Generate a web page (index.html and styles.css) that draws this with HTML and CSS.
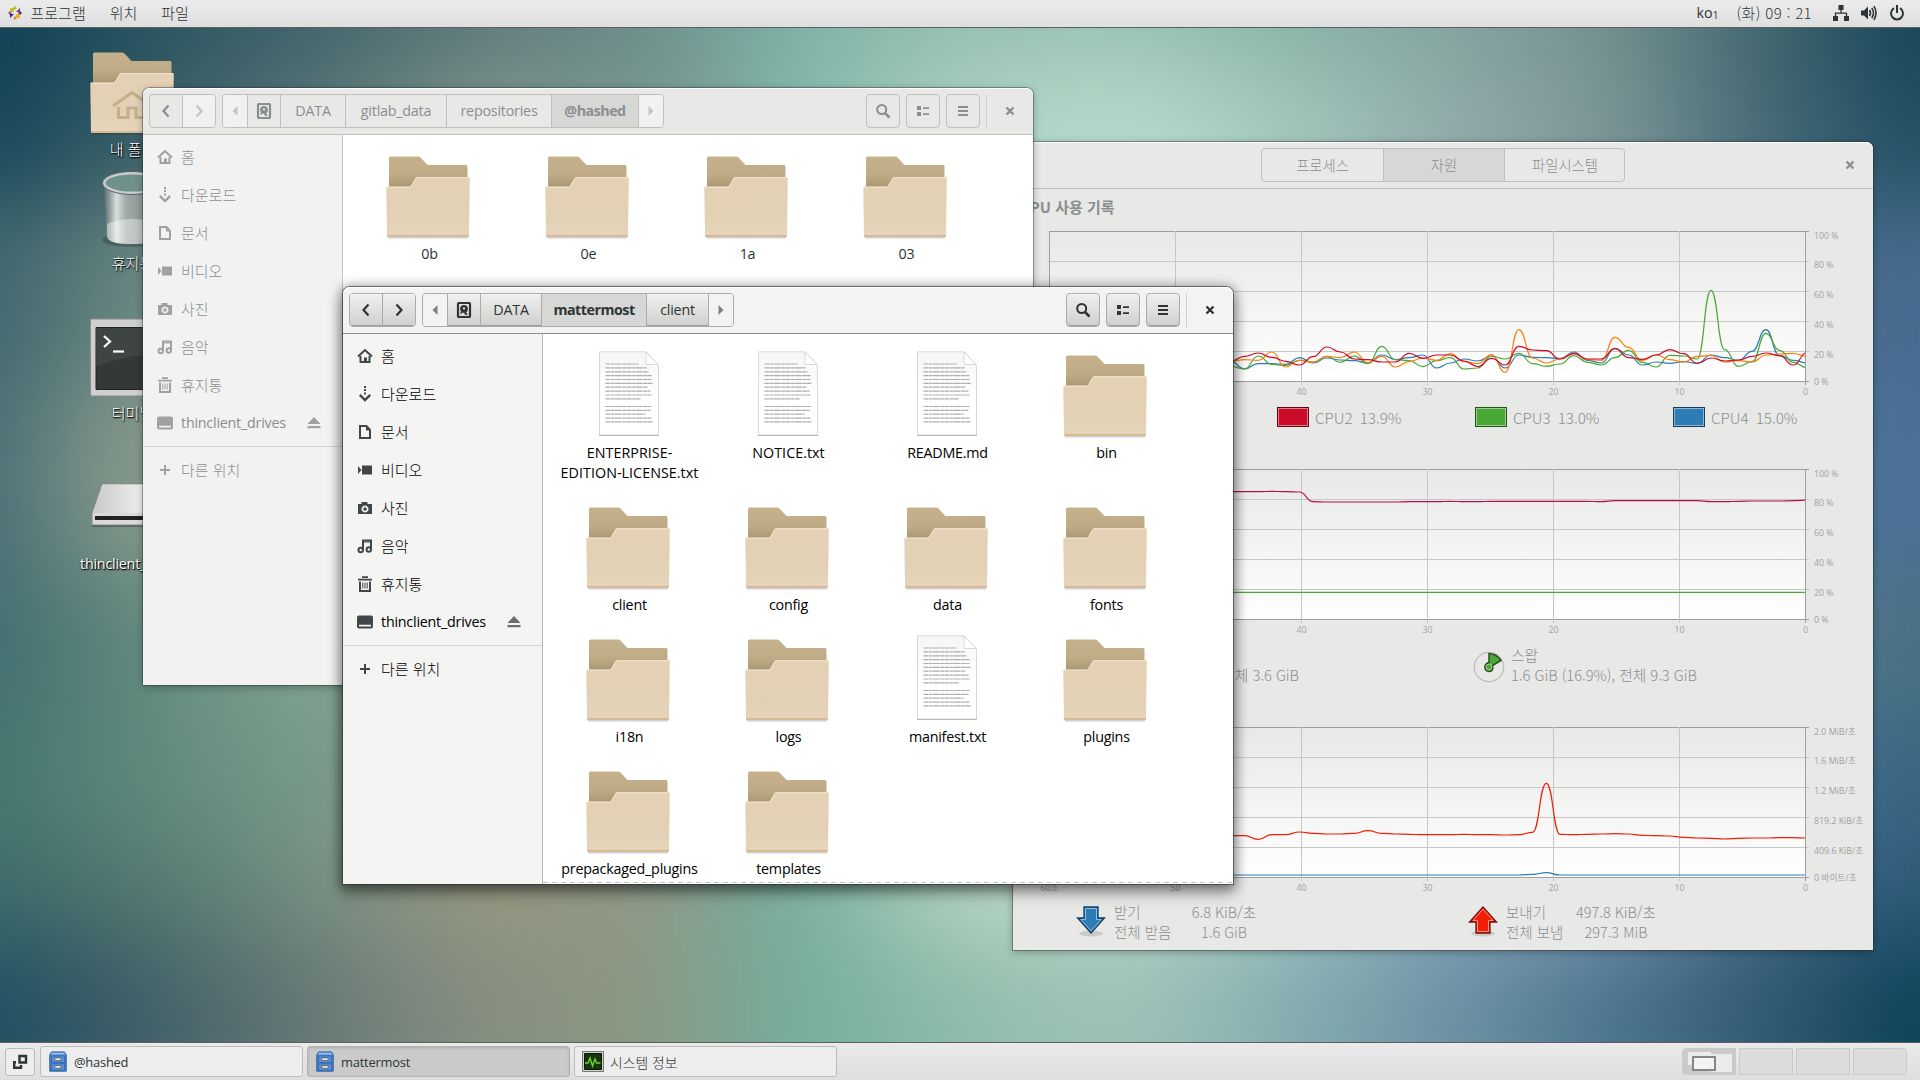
FILE: index.html
```html
<!DOCTYPE html>
<html lang="ko">
<head>
<meta charset="utf-8">
<title>Desktop</title>
<link rel="stylesheet" href="styles.css">
</head>
<body>
<svg class="defs" width="0" height="0">
  <defs>
    <linearGradient id="gBack" x1="0" y1="0" x2="0" y2="1"><stop offset="0" stop-color="#c5b28d"/><stop offset=".55" stop-color="#bfab86"/><stop offset="1" stop-color="#a6926e"/></linearGradient>
    <linearGradient id="gFront" x1="0" y1="0" x2="0" y2="1"><stop offset="0" stop-color="#e5d1b5"/><stop offset=".6" stop-color="#e2d0b5"/><stop offset="1" stop-color="#e6d5ba"/></linearGradient>
    <linearGradient id="gPage" x1="0" y1="0" x2="0" y2="1"><stop offset="0" stop-color="#f6f6f4"/><stop offset=".6" stop-color="#fff"/></linearGradient>
    <linearGradient id="gPlot" x1="0" y1="0" x2="0" y2="1"><stop offset="0" stop-color="#e8e8e7"/><stop offset="1" stop-color="#fff"/></linearGradient>
    <linearGradient id="gMetal" x1="0" y1="0" x2="1" y2="0"><stop offset="0" stop-color="#5f6b69"/><stop offset=".1" stop-color="#98a19f"/><stop offset=".22" stop-color="#eceeed"/><stop offset=".4" stop-color="#a9b1af"/><stop offset="1" stop-color="#808a88"/></linearGradient>
    <linearGradient id="gDrive" x1="0" y1="0" x2="1" y2="0"><stop offset="0" stop-color="#c9c9c9"/><stop offset=".7" stop-color="#f2f2f2"/><stop offset="1" stop-color="#d8d8d8"/></linearGradient>
    <clipPath id="plotClip"><rect x="0" y="0" width="756" height="151"/></clipPath>
    <symbol id="folder" viewBox="0 0 84 84">
      <path d="M2 81h80v1.5H2z" fill="#000" opacity=".18"/>
      <path d="M3 34V2Q3 .5 4.500 .5H32q1.500 0 2.500 1L41.500 9H80q1.500 0 1.500 1.500V34z" fill="url(#gBack)"/>
      <path d="M.3 31.800Q.3 30.500 1.600 30.500H23q1.500 0 2.200-1.200L29.500 22q.6-1 1.900-1H82.500q1.300 0 1.300 1.300L83 79.800q0 1.200-1.200 1.200H2.200Q1 81 1 79.800z" fill="url(#gFront)"/>
      <path d="M1 79h82v.8Q83 81 81.800 81H2.200Q1 81 1 79.800z" fill="#d6ba94"/>
      <path d="M1 31.200H23.500q1.500 0 2.200-1.200L30 22.600q.5-.9 1.400-.9H83" fill="none" stroke="#f0e2cc" stroke-width="1"/>
    </symbol>
    <symbol id="doc" viewBox="0 0 62 86">
      <path d="M1 1h48l12 13.500V85H1z" fill="#000" opacity=".13"/>
      <path d="M1.500 .8h46.500l12.500 14V84h-59z" fill="url(#gPage)" stroke="#d9d9d7" stroke-width="1"/>
      <path d="M1 84.500h60" stroke="#b9b9b7" stroke-width="1"/>
      <path d="M48 1v12.500h12z" fill="#fff" stroke="#d0d0ce" stroke-width=".8"/>
      <path d="M7.500 13h33m-33 3.900h41m-41 3.900h43m-43 3.900h46m-46 3.800h46m-46 3.900h47m-47 3.800h42m-42 3.900h45m-45 3.900h46m-46 3.800h35m-35 7.700h46m-46 3.900h45m-45 3.800h40m-40 3.900h46m-46 3.800h47" stroke="#999" stroke-width="1.200" stroke-dasharray="5 .6 3 .5 7 .6 4 .4" fill="none" opacity=".8"/>
    </symbol>
    <symbol id="home" viewBox="0 0 16 16"><path d="M1 8.600 8 2l7 6.600" fill="none" stroke="currentColor" stroke-width="2"/><path d="M3.500 8v6h9V8" fill="none" stroke="currentColor" stroke-width="2"/><path d="M7 9.500h3V14H7z" fill="currentColor"/></symbol>
    <symbol id="down" viewBox="0 0 16 16"><path d="M8 0v2m0 1v2m0 1.500v2" stroke="currentColor" stroke-width="2"/><path d="M2.800 8.800 8 14l5.200-5.200" fill="none" stroke="currentColor" stroke-width="2.400"/></symbol>
    <symbol id="page" viewBox="0 0 16 16"><path d="M3 2h6.500L13 5.800V14H3z" fill="none" stroke="currentColor" stroke-width="2"/><path d="M9 1v5.500h4.500z" fill="currentColor"/></symbol>
    <symbol id="video" viewBox="0 0 16 16"><path d="M5 3.500h10v9H5zM1 4l3.500 4L1 12z" fill="currentColor"/></symbol>
    <symbol id="camera" viewBox="0 0 16 16"><path d="M1 4h3.500V2h6v2H15v10H1zM8 5.500a3.500 3.500 0 1 0 .01 0z" fill="currentColor" fill-rule="evenodd"/><circle cx="8" cy="9" r="1.800" fill="currentColor"/></symbol>
    <symbol id="music" viewBox="0 0 16 16"><path d="M6 12V2.500h8V11" fill="none" stroke="currentColor" stroke-width="2"/><path d="M5 4h9" stroke="currentColor"/><circle cx="3.700" cy="12" r="2.200" fill="none" stroke="currentColor" stroke-width="2"/><circle cx="11.800" cy="11.500" r="2.200" fill="none" stroke="currentColor" stroke-width="2"/></symbol>
    <symbol id="bin" viewBox="0 0 16 16"><path d="M5 1.200h6M1 3.700h14" stroke="currentColor" stroke-width="1.800"/><path d="M3 5.500V15h10V5.500" fill="none" stroke="currentColor" stroke-width="2"/><path d="M5.800 6.500v6M8 6.500v6m2.200-6v6" stroke="currentColor"/></symbol>
    <symbol id="drive" viewBox="0 0 16 16"><path d="M2 1.500h12q2 0 2 2v9q0 2-2 2H2q-2 0-2-2v-9q0-2 2-2zM2 10.800v1.600h12v-1.600z" fill="currentColor" fill-rule="evenodd"/></symbol>
    <symbol id="plus" viewBox="0 0 16 16"><path d="M8 3v10M3 8h10" stroke="currentColor" stroke-width="2"/></symbol>
    <symbol id="eject" viewBox="0 0 14 14"><path d="M7 1l6.500 7h-13zM.5 10h13v2.200H.5z" fill="currentColor"/></symbol>
    <symbol id="prev" viewBox="0 0 16 16"><path d="M10.500 2.500 5.500 8l5 5.500" fill="none" stroke="currentColor" stroke-width="2.200"/></symbol>
    <symbol id="next" viewBox="0 0 16 16"><path d="M5.500 2.500 10.500 8l-5 5.500" fill="none" stroke="currentColor" stroke-width="2.200"/></symbol>
    <symbol id="triL" viewBox="0 0 16 16"><path d="M10.500 3v10L5.500 8z" fill="currentColor"/></symbol>
    <symbol id="triR" viewBox="0 0 16 16"><path d="M5.500 3v10l5-5z" fill="currentColor"/></symbol>
    <symbol id="disk" viewBox="0 0 16 16"><rect x="2" y="1" width="12" height="14" rx="1" fill="none" stroke="currentColor" stroke-width="2.200"/><circle cx="8" cy="6.800" r="3.900" fill="currentColor"/><circle cx="8" cy="6.400" r="1.100" fill="#e4e4e2"/><path d="M7 7l5 5.500-3 .5z" fill="currentColor"/><path d="M4.500 11.500l2.200-2" stroke="currentColor" stroke-width="1.200"/></symbol>
    <symbol id="search" viewBox="0 0 16 16"><circle cx="6.700" cy="6.500" r="4.500" fill="none" stroke="currentColor" stroke-width="2"/><path d="M9.800 9.800 14.500 14.500" stroke="currentColor" stroke-width="2.600"/></symbol>
    <symbol id="list" viewBox="0 0 16 16"><path d="M2 3h4v4H2zM2 9h4v4H2zM8 4.200h6v1.800H8zM8 10.200h6V12H8z" fill="currentColor"/></symbol>
    <symbol id="menu" viewBox="0 0 16 16"><path d="M3 3h10v2H3zM3 7h10v2H3zM3 11h10v2H3z" fill="currentColor"/></symbol>
    <symbol id="close" viewBox="0 0 16 16"><path d="M4.500 4.500l7 7m0-7l-7 7" stroke="currentColor" stroke-width="2.300"/></symbol>
    <symbol id="cabinet" viewBox="0 0 20 24"><path d="M3 1h14l2 3v18H1V4z" fill="#4a82cf" stroke="#2c5898"/><path d="M3.200 1.800h13.600l1.300 2H2z" fill="#9ec3f0"/><path d="M3 5.500h14v7H3zM3 14h14v7H3z" fill="#5c94de" stroke="#2f5fa6" stroke-width=".8"/><path d="M6.500 7.500h7v2.800h-7zM6.500 16h7v2.800h-7z" fill="#f4f4f0" stroke="#4b4b45" stroke-width=".8"/></symbol>
  </defs>
</svg>

<div class="backdrop"><div class="wallpaper"><i class="w1"></i><i class="w2"></i><i class="w3"></i><i class="w4"></i><i class="w5"></i><i class="w6"></i><i class="w7"></i><i class="w8"></i></div></div>

<header class="topbar">
  <div class="menus">
    <span class="apps"><svg width="14" height="14" viewBox="0 0 14 14"><path d="M7 0l2 2-2 2-2-2z" fill="#a4c639"/><path d="M7 14l2-2-2-2-2 2z" fill="#b9a13a"/><path d="M0 7l2-2 2 2-2 2z" fill="#a14f8c"/><path d="M14 7l-2-2-2 2 2 2z" fill="#3d3f7a"/><path d="M2 2h4v4z" fill="#9ccd2a"/><path d="M12 2v4L8 6z" fill="#932279"/><path d="M12 12H8V8z" fill="#efa724"/><path d="M2 12V8l4 0z" fill="#262577"/><path d="M2 2l4 4H2zM12 12l-4-4h4z" fill="#efa724"/></svg>프로그램</span>
    <span>위치</span><span>파일</span>
  </div>
  <div class="status">
    <span class="lang">ko<sub>1</sub></span><span class="clock">(화) 09 : 21</span>
    <svg width="16" height="16" viewBox="0 0 16 16"><path d="M5.500 0h5v5h-5zM0 11h5v5H0zM11 11h5v5h-5z" fill="#2e3436"/><path d="M8 5v3M2.500 11V8.200h11V11" fill="none" stroke="#2e3436" stroke-width="1.300"/></svg>
    <svg width="16" height="16" viewBox="0 0 16 16"><path d="M0 5.500h3L7 1.500v13l-4-4H0z" fill="#2e3436"/><path d="M8.500 5q2 3 0 6M10.800 3q3.400 5 0 10M13 1.200q4 6.800 0 13.600" fill="none" stroke="#2e3436" stroke-width="1.600"/></svg>
    <svg width="16" height="16" viewBox="0 0 16 16"><path d="M5 3.200a6 6 0 1 0 6 0" fill="none" stroke="#2e3436" stroke-width="2"/><path d="M8 0v8" stroke="#2e3436" stroke-width="2"/></svg>
  </div>
</header>

<main class="desktop">
  <div class="shortcut s-home"><svg width="84" height="84"><use href="#folder"/><path d="M23 54 42 40.500 61 54" fill="none" stroke="#c5ae8a" stroke-width="3"/><path d="M28.500 55v10.500H38V56h8v9.500h9.500V55" fill="none" stroke="#c5ae8a" stroke-width="3"/></svg><span>내 폴더</span></div>
  <div class="shortcut s-trash"><svg width="84" height="84" viewBox="0 0 84 84"><ellipse cx="42" cy="68" rx="30" ry="7" fill="#000" opacity=".2"/><path d="M14 13l3 51q0 8 25 8t25-8l3-51z" fill="url(#gMetal)" opacity=".88"/><path d="M17 52q25-10 50 0v12q0 8-25 8t-25-8z" fill="#fff" opacity=".4"/><ellipse cx="42" cy="11" rx="28" ry="10" fill="#70908c" stroke="#c9cecd" stroke-width="3"/><ellipse cx="42" cy="11" rx="29.500" ry="11.500" fill="none" stroke="#59625f" stroke-width="1"/></svg><span>휴지통</span></div>
  <div class="shortcut s-term"><svg width="84" height="84" viewBox="0 0 84 84"><path d="M.5 1h83v77H.5z" fill="#cfcfcd" stroke="#8a8a88"/><path d="M6 9.500h72v62H6z" fill="#323936" stroke="#222"/><path d="M6 10h72v25Q40 36 6 48z" fill="#47504b" opacity=".6"/><path d="M14 18l6 5.500-6 5.500" fill="none" stroke="#fff" stroke-width="2.200"/><path d="M23 33.500h11" stroke="#fff" stroke-width="2.200"/></svg><span>터미널</span></div>
  <div class="shortcut s-drive"><svg width="84" height="46" viewBox="0 0 84 46"><path d="M2 42h80v2H2z" fill="#000" opacity=".3"/><path d="M12 1h60l10 29v12H2V30z" fill="#dadada" stroke="#858585"/><path d="M12.500 1.500h59L81 30H3z" fill="url(#gDrive)"/><path d="M5 33h76v4H5z" fill="#222"/></svg><span class="la">thinclient_drives</span></div>

  <section class="window monitor back">
    <div class="header">
      <div class="tabs"><b>프로세스</b><b class="on">자원</b><b>파일시스템</b></div>
      <svg class="x" width="16" height="16"><use href="#close"/></svg>
    </div>
    <h2>CPU 사용 기록</h2>
    <svg class="chart" id="cpu" width="756" height="151"></svg>
    <div class="legend">
      <span><i class="c1"></i>CPU1<em>14.1%</em></span><span><i class="c2"></i>CPU2<em>13.9%</em></span><span><i class="c3"></i>CPU3<em>13.0%</em></span><span><i class="c4"></i>CPU4<em>15.0%</em></span>
    </div>
    <svg class="chart" id="mem" width="756" height="151"></svg>
    <div class="memory">
      <div class="m-left">전체 3.6 GiB</div>
      <svg width="32" height="32" viewBox="0 0 32 32"><circle cx="16" cy="16" r="14.700" fill="none" stroke="#bdbdba" stroke-width="1.300"/><path d="M16 2.500Q24 3 28 9.500L19.500 14.500Q21 20 16 20.500Q11 20 12 15Q13 12 16 11.500z" fill="#4aa836" stroke="#2a4a20" stroke-width="1.500"/><circle cx="16" cy="16" r="3" fill="#4aa836" stroke="#b5deaa" stroke-width=".8"/></svg>
      <div class="m-right">스왑<br>1.6 GiB (16.9%), 전체 9.3 GiB</div>
    </div>
    <svg class="chart" id="net" width="756" height="151"></svg>
    <div class="traffic">
      <svg width="30" height="32" viewBox="0 0 30 32"><ellipse cx="15" cy="28.500" rx="12" ry="3" fill="#000" opacity=".12"/><path d="M8 2h14v11h6.500L15 28 1.500 13H8z" fill="#2c7cb5" stroke="#173f5f" stroke-width="1.300"/><path d="M9.500 3.500h11v11h4.500L15 26 5 14.500h4.500z" fill="none" stroke="#8cc0e4"/></svg>
      <div class="t-name">받기<br>전체 받음</div><div class="t-val">6.8 KiB/초<br>1.6 GiB</div>
      <svg class="up" width="30" height="32" viewBox="0 0 30 32"><ellipse cx="15" cy="28.500" rx="12" ry="3" fill="#000" opacity=".12"/><path d="M8 28h14V17h6.500L15 2 1.500 17H8z" fill="#ef1e05" stroke="#7e1206" stroke-width="1.300"/><path d="M9.500 26.500h11v-11h4.500L15 4 5 15.500h4.500z" fill="none" stroke="#ff9385"/></svg>
      <div class="t-name">보내기<br>전체 보냄</div><div class="t-val">497.8 KiB/초<br>297.3 MiB</div>
    </div>
  </section>

  <section class="window files back f1">
    <div class="header la">
      <div class="group nav"><b class="sq"><svg><use href="#prev"/></svg></b><b class="sq flat dim"><svg><use href="#next"/></svg></b></div>
      <div class="group path"><b class="arrow flat"><svg><use href="#triL"/></svg></b><b class="sq"><svg><use href="#disk"/></svg></b><b class="p-data">DATA</b><b class="p-git">gitlab_data</b><b class="p-rep">repositories</b><b class="p-hash on">@hashed</b><b class="arrow flat"><svg><use href="#triR"/></svg></b></div>
      <div class="tools"><b><svg><use href="#search"/></svg></b><b><svg><use href="#list"/></svg></b><b><svg><use href="#menu"/></svg></b><i></i><svg class="x"><use href="#close"/></svg></div>
    </div>
    <div class="body">
      <nav>
        <a><svg><use href="#home"/></svg>홈</a><a><svg><use href="#down"/></svg>다운로드</a><a><svg><use href="#page"/></svg>문서</a><a><svg><use href="#video"/></svg>비디오</a><a><svg><use href="#camera"/></svg>사진</a><a><svg><use href="#music"/></svg>음악</a><a><svg><use href="#bin"/></svg>휴지통</a><a class="la"><svg><use href="#drive"/></svg>thinclient_drives<svg class="eject"><use href="#eject"/></svg></a>
        <hr><a><svg><use href="#plus"/></svg>다른 위치</a>
      </nav>
      <div class="grid la">
        <div><svg class="fo"><use href="#folder"/></svg>0b</div><div><svg class="fo"><use href="#folder"/></svg>0e</div><div><svg class="fo"><use href="#folder"/></svg>1a</div><div><svg class="fo"><use href="#folder"/></svg>03</div>
      </div>
    </div>
  </section>

  <section class="window files front f2">
    <div class="header la">
      <div class="group nav"><b class="sq"><svg><use href="#prev"/></svg></b><b class="sq"><svg><use href="#next"/></svg></b></div>
      <div class="group path"><b class="arrow flat"><svg><use href="#triL"/></svg></b><b class="sq"><svg><use href="#disk"/></svg></b><b class="p-data">DATA</b><b class="p-mat on">mattermost</b><b class="p-cli">client</b><b class="arrow flat"><svg><use href="#triR"/></svg></b></div>
      <div class="tools"><b><svg><use href="#search"/></svg></b><b><svg><use href="#list"/></svg></b><b><svg><use href="#menu"/></svg></b><i></i><svg class="x"><use href="#close"/></svg></div>
    </div>
    <div class="body">
      <nav>
        <a><svg><use href="#home"/></svg>홈</a><a><svg><use href="#down"/></svg>다운로드</a><a><svg><use href="#page"/></svg>문서</a><a><svg><use href="#video"/></svg>비디오</a><a><svg><use href="#camera"/></svg>사진</a><a><svg><use href="#music"/></svg>음악</a><a><svg><use href="#bin"/></svg>휴지통</a><a class="la"><svg><use href="#drive"/></svg>thinclient_drives<svg class="eject"><use href="#eject"/></svg></a>
        <hr><a><svg><use href="#plus"/></svg>다른 위치</a>
      </nav>
      <div class="grid more la">
        <div class="caps"><svg class="do"><use href="#doc"/></svg>ENTERPRISE-<br>EDITION-LICENSE.txt</div><div class="caps"><svg class="do"><use href="#doc"/></svg>NOTICE.txt</div><div><svg class="do"><use href="#doc"/></svg>README.md</div><div><svg class="fo"><use href="#folder"/></svg>bin</div>
        <div><svg class="fo"><use href="#folder"/></svg>client</div><div><svg class="fo"><use href="#folder"/></svg>config</div><div><svg class="fo"><use href="#folder"/></svg>data</div><div><svg class="fo"><use href="#folder"/></svg>fonts</div>
        <div><svg class="fo"><use href="#folder"/></svg>i18n</div><div><svg class="fo"><use href="#folder"/></svg>logs</div><div><svg class="do"><use href="#doc"/></svg>manifest.txt</div><div><svg class="fo"><use href="#folder"/></svg>plugins</div>
        <div><svg class="fo"><use href="#folder"/></svg>prepackaged_plugins</div><div><svg class="fo"><use href="#folder"/></svg>templates</div>
      </div>
    </div>
  </section>
</main>

<footer class="taskbar">
  <div class="show"><svg width="16" height="16" viewBox="0 0 16 16"><path d="M7.500 2h6.500v6.500H7.500z" fill="none" stroke="#2e3436" stroke-width="2.400"/><path d="M2.200 7v6.800H9V11M1 8.200h3" fill="none" stroke="#2e3436" stroke-width="2.400"/></svg></div>
  <div class="task la"><svg width="20" height="24"><use href="#cabinet"/></svg>@hashed</div>
  <div class="task la on"><svg width="20" height="24"><use href="#cabinet"/></svg>mattermost</div>
  <div class="task"><svg width="22" height="22" viewBox="0 0 22 22"><path d="M.5 .5h21v20H.5z" fill="#d3d3d1" stroke="#777"/><path d="M2.500 2.500h17v16h-17z" fill="#17330f" stroke="#0b1a07"/><path d="M3 12h3l2-5 2.500 8 2.500-7 1.500 4h4" fill="none" stroke="#6fd32c" stroke-width="1.400"/></svg>시스템 정보</div>
  <div class="spaces"><div class="cur"><i class="m1"></i><i class="m2"></i><i class="m3"></i></div><div></div><div></div><div></div></div>
</footer>
<script src="charts.js"></script>
</body>
</html>
```
FILE: styles.css
```css
* { box-sizing: border-box; }
html { height: 1080px; overflow: hidden; }
body { margin: 0; width: 1920px; height: 1080px; overflow: hidden; position: relative; display: flex; flex-direction: column; background: #5f8a88; color: #2e3436; font: 300 15px/20px "Noto Sans CJK KR", sans-serif; }
svg { display: block; flex: none; overflow: visible; }
b { font-weight: inherit; }
em, i { font-style: normal; }
.defs { position: absolute; }
.la { font-family: "Open Sans", "Noto Sans CJK KR", sans-serif; font-size: 14.3px; font-weight: 400; letter-spacing: -.22px; }

.backdrop { position: absolute; inset: 0; overflow: clip; contain: paint; }
.wallpaper { margin: -60px -80px; height: 1200px; display: grid; grid-template-rows: 130px 130px 180px 190px 150px 120px 100px 200px; filter: blur(45px); }
.w1 { background: linear-gradient(90deg, #0b3c52 3%, #27525f 11%, #45656c 20%, #5f787b 27%, #6e8d89 35%, #7cb2a7 42%, #97bfaf 50%, #9ac3b3 58%, #88b3a7 66%, #86a5a0 73%, #75918f 81%, #3f636c 89%, #0f3e54 97%); }
.w2 { background: linear-gradient(90deg, #134358 3%, #3a5f68 11%, #5f7a7b 20%, #80988d 27%, #78968f 35%, #84b8ac 42%, #add2c3 50%, #b8dccd 58%, #a3c7bc 66%, #93adab 73%, #7e9798 81%, #436874 89%, #1b495f 97%); }
.w3 { background: linear-gradient(90deg, #3b636d 3%, #6f8a83 11%, #80988c 20%, #84b8ac 42%, #b4d8ca 58%, #93adab 73%, #6b8790 86%, #45698a 93%, #466b91 97%); }
.w4 { background: linear-gradient(90deg, #446b74 3%, #8a9b8b 10%, #87998b 25%, #a4c9b8 50%, #83a0a8 75%, #4e739a 92%, #4a6f96 97%); }
.w5 { background: linear-gradient(90deg, #3f6c70 3%, #5f877d 10%, #7fa28f 18%, #8fa591 30%, #a4c9b8 50%, #7e98a8 75%, #527688 92%, #456f84 97%); }
.w6 { background: linear-gradient(90deg, #44746f 3%, #5f8a7d 11%, #7b9b89 20%, #969f8a 27%, #8ba08f 35%, #7bb5a5 42%, #c3dac9 50%, #c8dece 56%, #a5c4c4 66%, #8ba3ba 75%, #7490b0 85%, #3d6a88 93%, #35627f 97%); }
.w7 { background: linear-gradient(90deg, #3b6969 3%, #547970 11%, #7b9183 20%, #97977f 27%, #909786 35%, #75ae9d 42%, #b5d3c0 50%, #c3dbcb 56%, #a5c7c6 65%, #8ba8bd 73%, #7a97b6 81%, #46698a 89%, #285775 97%); }
.w8 { background: linear-gradient(90deg, #1d4d61 3%, #426069 11%, #6c7c78 20%, #868f80 27%, #8b9882 35%, #72ae9d 42%, #8fbcaa 50%, #9fc4b8 58%, #84adb0 66%, #6f94a5 73%, #4e7690 81%, #305871 89%, #093f56 97%); }

.topbar { position: relative; height: 28px; flex: none; display: flex; justify-content: space-between; align-items: center; padding: 0 15px 2px 8px; background: linear-gradient(#ebebeb, #dfdfdf); border-bottom: 1px solid #5c5f5e; }
.menus, .status, .apps { display: flex; align-items: center; }
.menus { gap: 24px; }
.apps { gap: 8.500px; }
.status { gap: 12px; }
.lang { font: 14.3px/20px "Open Sans", sans-serif; margin-right: 6px; }
.lang sub { font-size: 10px; line-height: 0; vertical-align: -1px; }
.clock { margin-right: 9px; letter-spacing: .35px; }

.desktop { position: relative; flex: 1; }
.shortcut { position: absolute; left: 72px; width: 120px; display: flex; flex-direction: column; align-items: center; color: #fff; text-shadow: 1px 1px 1px #000, 0 1px 2px rgba(0,0,0,.7); }
.shortcut span { padding-left: 1px; }
.s-home { top: 24px; gap: 3px; }
.s-trash { top: 144px; gap: -1px; }
.s-trash span { margin-top: -3px; }
.s-term { top: 290px; gap: 1px; }
.s-drive { top: 455px; gap: 25px; }

.window { position: absolute; display: flex; flex-direction: column; border-radius: 7px 7px 0 0; background: #fff; }
.back { color: #8b8e8f; box-shadow: 0 0 0 1px rgba(40,50,50,.4), 0 2px 8px rgba(0,0,0,.3); }
.front { color: #2e3436; box-shadow: 0 0 0 1px rgba(40,50,50,.6), 0 2px 12px 3px rgba(0,0,0,.4), 0 10px 16px rgba(0,0,0,.25); }
.header { height: 47px; flex: none; display: flex; align-items: center; padding: 0 6px; gap: 6px; border-radius: 7px 7px 0 0; background: #e8e8e7; border-bottom: 1px solid #c0c0bd; box-shadow: inset 0 1px #fff; font-size: 14.3px; }
.front .header { background: #f3f3f3; border-bottom-color: #8f8f8a; }
.header svg { width: 16px; height: 16px; }
.files { width: 890px; height: 597px; }
.f1 { left: 143px; top: 60px; }
.f2 { left: 343px; top: 259px; }
.group { display: flex; height: 34px; border: 1px solid #bfbfbc; border-radius: 4px; overflow: hidden; }
.group b { display: flex; align-items: center; justify-content: center; border-left: 1px solid #bfbfbc; }
.group b:first-child { border-left: 0; }
.group .sq { width: 33px; }
.nav .sq:first-child { width: 32px; }
.group .arrow { width: 25px; }
.group .arrow:first-child { width: 24px; }
.group .flat { background: #f1f1f0; }
.arrow svg { opacity: .6; }
.back .arrow svg { opacity: .45; }
.dim svg { opacity: .45; }
.group .on, .tabs .on { background: #d7d7d6; font-weight: 700; }
.tabs .on { font-weight: inherit; }
.p-data { width: 65px; } .f2 .p-data { width: 61px; }
.p-git { width: 101px; } .p-rep { width: 105px; } .p-hash { width: 87px; }
.p-mat { width: 105px; } .p-cli { width: 62px; }
.group .on { letter-spacing: -.5px; }
.front .group, .front .group b, .front .tools b { border-color: #ababa7; }
.front .group b:not(.flat):not(.on), .front .tools b { background: linear-gradient(#f0f0ef, #cfcfcd); box-shadow: inset 0 1px #fafafa, inset 0 -1px #a09f9b; }
.front .flat { background: #f3f3f3; }
.tools { margin-left: auto; display: flex; align-items: center; gap: 6px; }
.tools b { width: 34px; height: 34px; border: 1px solid #bfbfbc; border-radius: 4px; display: grid; place-items: center; }
.tools i { width: 1px; height: 34px; background: #cfcfcc; }
.tools .x { margin: 0 9px; }

.body { flex: 1; display: flex; min-height: 0; }
nav { width: 200px; padding-top: 3px; background: #f2f2f2; border-right: 1px solid #c6c6c3; }
.front nav { background: #f4f4f2; color: #000; border-right-color: #b4b4b0; }
nav a { height: 38px; display: flex; align-items: center; gap: 8px; padding-left: 14px; font-size: 15px; }
nav a.la { font-size: 14.3px; }
nav svg { width: 16px; height: 16px; opacity: .8; }
.front nav svg { color: #2e3436; opacity: .9; }
nav .eject { width: 14px; height: 14px; margin-left: auto; margin-right: 21px; }
.front nav .eject { opacity: .7; }
nav hr { margin: 4px 0; border: 0; height: 1px; background: #d5d5d3; }
.grid { flex: 1; display: grid; grid-template-columns: repeat(4, 159px); grid-auto-rows: 132px; padding: 14px 0 0 7px; color: #2e3436; }
.more { grid-template-rows: 152px; color: #000; padding-bottom: 0; background: repeating-linear-gradient(90deg, #c4c4c2 0 5px, #fff 5px 9px) left bottom 1px / 100% 1px no-repeat; }
.grid div { display: flex; flex-direction: column; align-items: center; text-align: center; }
.grid .caps { letter-spacing: .04px; }
.fo { width: 84px; height: 84px; margin: 7px 1px 4px 0; }
.grid .fo, .grid .do { margin-left: -2px; }
.do { width: 62px; height: 86px; margin: 3px 0 6px; }

.monitor { left: 1013px; top: 114px; width: 860px; height: 808px; background: #e8e8e6; }
.monitor .header { justify-content: flex-end; padding-right: 15px; gap: 217px; }
.tabs { display: grid; grid-template-columns: repeat(3, 121px); height: 34px; border: 1px solid #bfbfbc; border-radius: 4px; width: 364px; }
.tabs b { display: grid; place-items: center; border-left: 1px solid #bfbfbc; }
.tabs b:first-child { border-left: 0; }
h2 { margin: 8px 0 0 7px; font-size: 15px; line-height: 20px; font-weight: 700; }
.chart { margin-left: 36px; }
#cpu { margin-top: 14px; }
.chart text { font: 8.800px "Open Sans", "Noto Sans CJK KR", sans-serif; fill: #a0a2a2; }
.legend { display: grid; grid-template-columns: repeat(4, 198px); margin: 24px 0 0 66px; height: 22px; font-size: 15.2px; }
.legend span { display: flex; align-items: center; }
.legend em { margin-left: 7px; }
.legend i { width: 32px; height: 20px; margin-right: 6px; border: 1px solid; box-shadow: inset 0 0 0 1px rgba(255,255,255,.45); }
.c1 { background: #ff7f0e; border-color: #7e3d04 !important; }
.c2 { background: #cb0c29; border-color: #5f0714 !important; }
.c3 { background: #4aa836; border-color: #23521a !important; }
.c4 { background: #2c7cb5; border-color: #163e5b !important; }
#mem { margin-top: 41px; }
.memory { display: flex; align-items: flex-end; height: 38px; margin: 26px 0 2px; line-height: 19.500px; font-size: 14.7px; }
.m-left { width: 286px; text-align: right; }
.memory svg { margin: 0 6px 1px 174px; }
#net { margin-top: 41px; }
.traffic { display: flex; margin: 24px 0 0 63px; line-height: 19.500px; font-size: 14.5px; }
.traffic svg { margin-top: 3px; }
.t-name { width: 63px; margin-left: 8px; white-space: nowrap; }
.t-val { width: 94px; text-align: center; white-space: nowrap; }
.traffic .up { margin-left: 197px; }

.taskbar { position: relative; height: 38px; flex: none; display: flex; align-items: center; padding: 0 13px 0 5px; gap: 4px; background: linear-gradient(#eaeaea, #dedede); border-top: 1px solid #5c5f5e; font-size: 13.8px; }
.show { width: 30px; height: 28px; border: 1px solid #bcbcba; border-radius: 3px; background: #ededed; display: grid; place-items: center; margin-right: 1px; }
.task { width: 263px; height: 31px; border: 1px solid #bdbdbb; border-radius: 3px; background: #ededed; display: flex; align-items: center; gap: 6px; padding-left: 7px; }
.task.la { font-size: 12.9px; }
.task svg { height: 22px; }
.task.on { background: #cacaca; border-color: #b3b3b1; box-shadow: inset 0 1px 3px rgba(0,0,0,.15); }
.spaces { margin-left: auto; display: flex; gap: 3px; }
.spaces div { width: 54px; height: 27px; background: #dcdcdc; border: 1px solid #cacaca; position: relative; }
.spaces div:last-child { border-radius: 0 4px 4px 0; }
.spaces .cur { background: #cacaca; border-radius: 4px 0 0 4px; }
.cur i { position: absolute; background: #ececec; }
.m1 { left: 5px; top: 3px; width: 23px; height: 13px; }
.m2 { left: 28px; top: 5px; width: 21px; height: 18px; }
.cur .m3 { left: 9px; top: 7px; width: 24px; height: 15px; background: #f4f4f2; border: 2px solid #868686; }
```
FILE: charts.js
```js
// Samples run from newest to oldest; 450 units span the full plot height.
const STEP = 13.72, START = 758;
const cpu = {
  '#2c7cb5': [54,62,76,154,89,62,70,78,53,58,53,57,48,78,98,54,62,87,67,70,71,78,39,75,60,66,54,39,78,70,64,78,54,61,63,69,54,70,50,52,52,36,59],
  '#4aa836': [40,56,92,143,58,44,94,272,66,75,77,42,56,92,70,48,56,76,51,44,52,83,66,75,39,36,70,61,43,61,64,104,52,75,56,74,57,62,47,50,75,36,44],
  '#ff7f0e': [74,83,81,78,57,61,57,77,74,57,64,78,61,101,131,62,64,82,66,54,69,154,26,79,52,58,82,62,69,58,42,74,55,87,70,74,56,62,42,87,62,64,59],
  '#cb0c29': [86,48,76,84,74,63,60,69,53,82,94,78,65,70,97,66,66,83,66,91,93,104,48,68,43,60,78,78,68,83,57,57,64,66,87,102,73,48,59,71,84,74,59]
};
const mem = {
  '#4aa836': Array(43).fill(80),
  '#b31050': [357,355,354,354,354,353,352,352,355,355,355,355,355,355,355,352,353,353,353,353,353,353,353,353,352,352,353,352,352,352,351,351,351,351,351,351,352,381,382,383,382,382,382]
};
const net = {
  '#2c7cb5': [6,6,6,6,6,6,6,6,6,6,6,6,6,6,6,6,6,6,6,13,8,6,6,6,6,6,6,6,6,6,6,6,6,6,6,6,6,6,6,6,6,6,6],
  '#ef1e05': [117,118,118,117,117,116,114,116,117,119,123,124,125,129,130,129,128,127,128,281,134,127,126,127,127,128,127,127,127,128,129,131,139,131,129,129,131,135,127,127,113,124,124]
};

function curve(values) {
  let x = START, y = 150 - values[0] / 3, d = `M${x} ${y}`;
  for (const v of values.slice(1)) {
    const nx = x - STEP, ny = 150 - v / 3, mx = (x + nx) / 2;
    d += `C${mx} ${y} ${mx} ${ny} ${nx} ${ny}`;
    x = nx; y = ny;
  }
  return d;
}

function draw(id, series, labels) {
  let s = '<rect width="756" height="150" fill="url(#gPlot)"/>';
  for (let i = 0; i < 6; i++) {
    const y = i * 30 + .5, edge = i === 0 || i === 5;
    s += `<path d="M0 ${y}h760" stroke="${edge ? '#9c9f9f' : '#c6c7c9'}"/>`;
    s += `<text x="765" y="${[8, 37, 67, 97, 127, 154][i]}">${labels[i]}</text>`;
  }
  for (let i = 0; i < 7; i++) {
    const x = i * 126 + .5, edge = i === 0 || i === 6;
    s += `<path d="M${x} 0v154" stroke="${edge ? '#9c9f9f' : '#c6c7c9'}"/>`;
    s += `<text x="${x}" y="164" text-anchor="middle">${i ? 60 - i * 10 : '60초'}</text>`;
  }
  s += '<g clip-path="url(#plotClip)" fill="none" stroke-width="1.2">';
  for (const [color, values] of Object.entries(series)) s += `<path d="${curve(values)}" stroke="${color}"/>`;
  document.getElementById(id).innerHTML = s + '</g>';
}

const percent = ['100 %', '80 %', '60 %', '40 %', '20 %', '0 %'];
draw('cpu', cpu, percent);
draw('mem', mem, percent);
draw('net', net, ['2.0 MiB/초', '1.6 MiB/초', '1.2 MiB/초', '819.2 KiB/초', '409.6 KiB/초', '0 바이트/초']);
```
